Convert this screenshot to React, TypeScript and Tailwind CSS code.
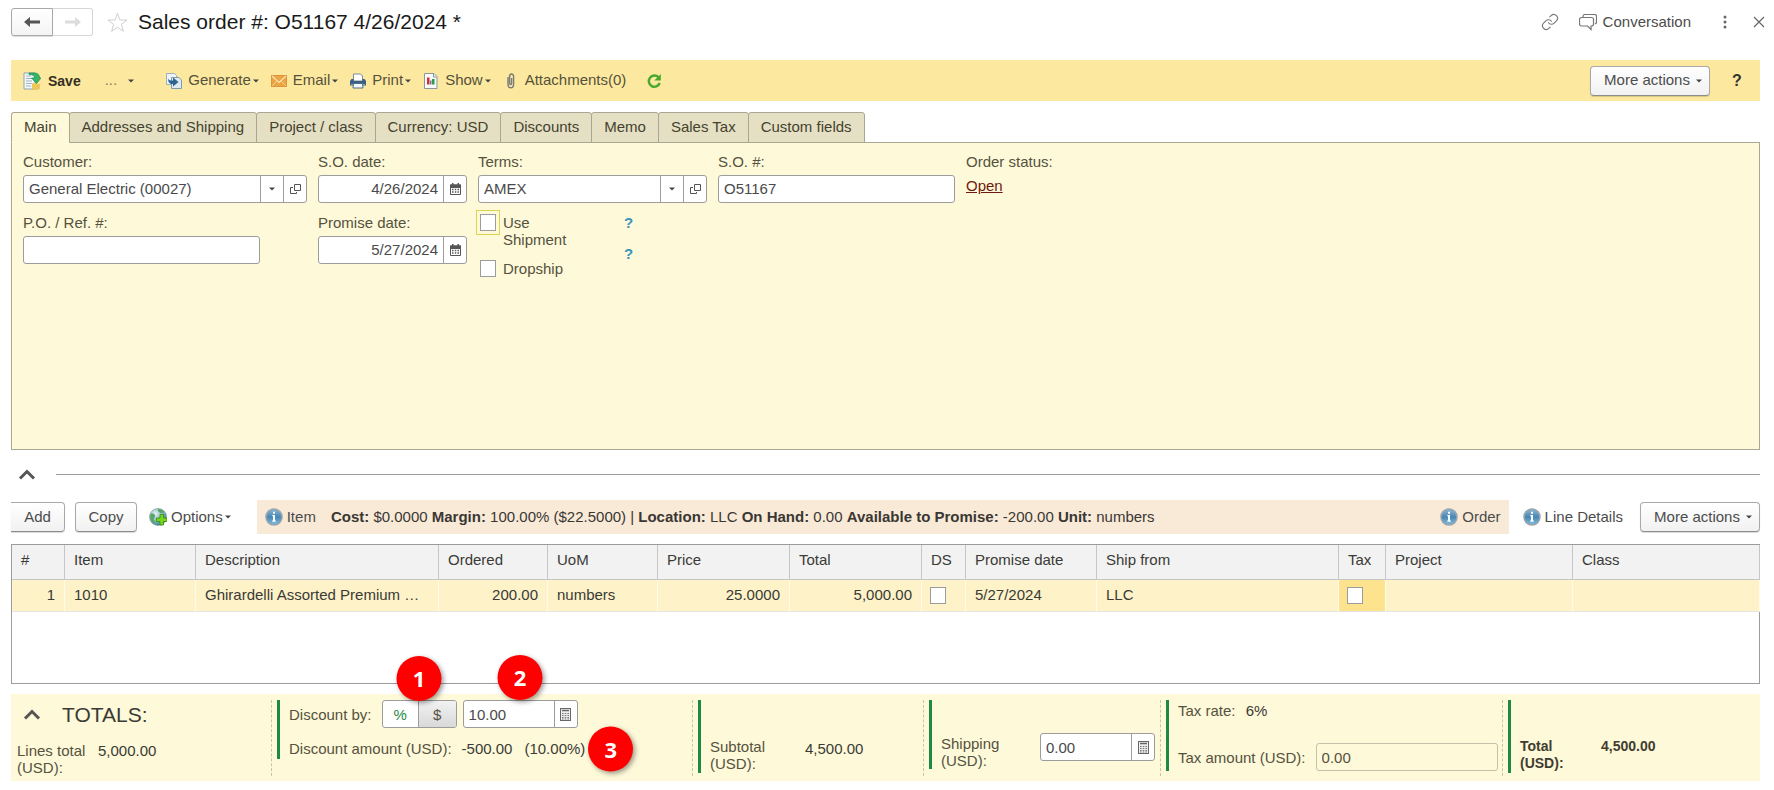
import type { ReactNode } from "react";
import { Link } from "lucide-react";

const Caret = () => (
  <svg width="6" height="4" viewBox="0 0 6 4" className="shrink-0" aria-hidden="true">
    <path d="M0 0.5h6L3 3.5z" fill="#444" />
  </svg>
);

const ChevronUp = () => (
  <svg width="18" height="12" viewBox="0 0 18 12" fill="none" aria-hidden="true">
    <path d="M2 10.500 9 3.500l7 7" stroke="#555" strokeWidth="3" />
  </svg>
);

const SaveIcon = () => (
  <svg width="18" height="18" viewBox="0 0 18 18" aria-hidden="true">
    <path d="M1 1h11v16H1z" fill="#f4f8fa" stroke="#8fa5b0" />
    <path d="M3 4h5M3 6.500h6M3 9h6M3 11.500h6M3 14h5" stroke="#9fb4c0" />
    <ellipse cx="13" cy="15.500" rx="4" ry="2" fill="#e2b33c" />
    <path d="M9 11v4.500a4 2 0 0 0 8 0V12z" fill="#efc75a" />
    <path d="M6 1h5C15 1 16.500 3 16.500 6H18l-4.500 5.500L8.500 6h3c0-2.500-2-3.500-5.500-3.500z" fill="#36b56b" stroke="#1d8a4b" strokeWidth="0.7" />
  </svg>
);

const GenerateIcon = () => (
  <svg width="16" height="16" viewBox="0 0 16 16" aria-hidden="true">
    <path d="M0.500 0.500h8l2 2v9h-10z" fill="#eef4f8" stroke="#9db0bd" />
    <path d="M5.500 4.500h7.500l2.500 2.500v8.500h-10z" fill="#dfeaf1" stroke="#7f9cae" />
    <path d="M2.500 5c0 2 1 2.500 4.500 2.500V4.500L12.500 9 7 13.500V11C3.500 11 1.500 9 2.500 5z" fill="#2f6490" />
  </svg>
);

const EmailIcon = () => (
  <svg width="16" height="16" viewBox="0 0 16 16" aria-hidden="true">
    <rect x="0.500" y="2.500" width="15" height="11" fill="#eba544" stroke="#d9963a" />
    <path d="M1 13 6 8M15 13l-5-5" stroke="#f6cf8c" />
    <path d="M1 3l7 6.500L15 3" fill="none" stroke="#fbe3b4" strokeWidth="1.200" />
  </svg>
);

const PrintIcon = () => (
  <svg width="16" height="16" viewBox="0 0 16 16" aria-hidden="true">
    <path d="M3.500 1h7l2 2v5h-9z" fill="#fff" stroke="#7d8b96" />
    <path d="M1.500 6h2v2h9V6h2L16 8v4.500h-16V8z" fill="#3c5f80" />
    <path d="M1 11.500h14" stroke="#88a8c2" />
    <path d="M3.500 10.500h9l.5 4.500H3z" fill="#f3f7fa" stroke="#4a6e8e" />
  </svg>
);

const ShowIcon = () => (
  <svg width="16" height="16" viewBox="0 0 16 16" aria-hidden="true">
    <path d="M1.500 0.500h9.500l3 3v12H1.500z" fill="#f7f9fa" stroke="#8b979f" />
    <path d="M10.500 1v3h3" fill="none" stroke="#8b979f" />
    <path d="M4 4.500h2.500v7H4z" fill="#d22f2f" />
    <path d="M7 7.500h1.500v4H7z" fill="#6d7f8b" />
    <path d="M9 6h2.500v5.500H9z" fill="#2d9a4a" />
  </svg>
);

const ClipIcon = () => (
  <svg width="16" height="16" viewBox="0 0 16 16" fill="none" aria-hidden="true">
    <path d="M5 4v7a2.800 3.800 0 0 0 5.600 0V3.500a2 2.500 0 0 0-4 0V10a1 1.500 0 0 0 2 0V5" stroke="#7a7a7a" strokeWidth="1.400" />
  </svg>
);

const RefreshIcon = () => (
  <svg width="16" height="16" viewBox="0 0 16 16" fill="none" aria-hidden="true">
    <path d="M12.500 4.300A5.600 5.600 0 1 0 13.700 10" stroke="#4aa82f" strokeWidth="2.500" />
    <path d="M14.800 1v6.500H8.300z" fill="#4aa82f" />
  </svg>
);

const OptionsIcon = () => (
  <svg width="18" height="18" viewBox="0 0 18 18" aria-hidden="true">
    <defs>
      <radialGradient id="globe" cx="0.35" cy="0.3" r="0.8">
        <stop offset="0" stopColor="#e6f1f1" />
        <stop offset="0.6" stopColor="#79b0b8" />
        <stop offset="1" stopColor="#2f6f8a" />
      </radialGradient>
    </defs>
    <circle cx="9" cy="9" r="8.500" fill="url(#globe)" stroke="#6a929a" strokeWidth="0.600" />
    <path d="M1.500 6c3-1 4.500 0 4.500 2S4 10 5 12s2 3 1 4C2.500 14.500.5 11 1.500 6zM9 1c3 0 5 1 6.500 3-2 1-3.500 1.500-5 .5S8.500 2.500 9 1z" fill="#5aa565" />
    <path d="M11 6.500h3.500V10H18v3.500h-3.500V17H11v-3.500H7.500V10H11z" fill="#7bd61c" stroke="#2f8a12" strokeWidth="0.800" />
  </svg>
);

const InfoIcon = () => (
  <svg width="18" height="18" viewBox="0 0 18 18" className="shrink-0" aria-hidden="true">
    <defs>
      <linearGradient id="info" x1="0" y1="0" x2="0" y2="1">
        <stop offset="0" stopColor="#8db8d6" />
        <stop offset="0.5" stopColor="#4886b4" />
        <stop offset="1" stopColor="#7cc0e4" />
      </linearGradient>
    </defs>
    <circle cx="9" cy="9" r="8" fill="url(#info)" stroke="#98a5ae" strokeWidth="1.600" />
    <path d="M8 3.800h2v1.900H8zM7.300 7H10v5.600h.8v1.200H7.200v-1.200H8V8.200h-.7z" fill="#fff" />
  </svg>
);

const CalendarIcon = () => (
  <svg width="11" height="12" viewBox="0 0 11 12" aria-hidden="true">
    <path d="M0.500 2h10v9.500h-10z" fill="#fff" stroke="#555" />
    <path d="M0 1.500h11V5H0zM2 0h1.500v2H2zM7.500 0H9v2H7.500z" fill="#555" />
    <path d="M2 6.500h1.500M4.800 6.500h1.500M7.500 6.500H9M2 9h1.500M4.800 9h1.500M7.500 9H9" stroke="#555" strokeWidth="1.300" />
  </svg>
);

const OpenIcon = () => (
  <svg width="11" height="11" viewBox="0 0 11 11" fill="none" stroke="#555" aria-hidden="true">
    <path d="M4.500 0.500h6v6h-6z" />
    <path d="M3 3.500H0.500v6h6V8" />
  </svg>
);

const CalcIcon = () => (
  <svg width="11" height="13" viewBox="0 0 11 13" aria-hidden="true">
    <rect x="0.500" y="0.500" width="10" height="12" fill="#eee" stroke="#666" />
    <path d="M2 2.500h7" stroke="#666" strokeWidth="1.600" />
    <path d="M2 5.500h7M2 7.500h7M2 9.500h7M2 11h7" stroke="#777" strokeWidth="1.200" strokeDasharray="1.600 1.100" />
  </svg>
);

const MenuItem = ({ icon, label }: { icon: ReactNode; label: string }) => (
  <button className="flex items-center">
    {icon}
    <span className="ml-1.5 mr-0.5">{label}</span>
    <Caret />
  </button>
);

const buttonClass =
  "flex h-[30px] items-center justify-center rounded-sm border border-[#a9a9a9] border-b-[#8c8c8c] bg-linear-to-b from-white to-[#f1f1f1] shadow-[0_1px_1px_rgba(0,0,0,0.15)]";

const MoreActions = () => (
  <button className={`${buttonClass} w-[120px] gap-1.5 pl-1.5`}>
    More actions
    <Caret />
  </button>
);

const checkboxClass = "h-[17px] w-4 shrink-0 appearance-none border border-[#9c9c9c] bg-white";

type FieldProps = {
  id: string;
  label: string;
  value?: string;
  right?: boolean;
  children?: ReactNode;
};

const Box = ({ id, value = "", right, children }: Omit<FieldProps, "label">) => (
  <div className="flex h-7 overflow-hidden rounded-[3px] border border-[#9c9c9c] bg-white">
    <input
      id={id}
      defaultValue={value}
      className={`min-w-0 flex-1 px-[5px] text-[#4a4a4a] outline-none ${right ? "text-right" : ""}`}
    />
    {children}
  </div>
);

const Field = ({ label, ...rest }: FieldProps) => (
  <div>
    <label htmlFor={rest.id} className="mb-[3px] block leading-5">
      {label}
    </label>
    <Box {...rest} />
  </div>
);

const Addon = ({ label, children }: { label: string; children: ReactNode }) => (
  <button
    aria-label={label}
    className="flex w-[23px] shrink-0 items-center justify-center border-l border-[#9c9c9c]"
  >
    {children}
  </button>
);

const LookupAddons = () => (
  <>
    <Addon label="Choose">
      <Caret />
    </Addon>
    <Addon label="Open">
      <OpenIcon />
    </Addon>
  </>
);

const DateAddon = () => (
  <Addon label="Calendar">
    <CalendarIcon />
  </Addon>
);

const CalcAddon = () => (
  <Addon label="Calculator">
    <CalcIcon />
  </Addon>
);

const Header = () => (
  <header className="mb-4 flex h-11 items-center pr-[9px] pl-[11px] text-[#4c4c4c]">
    <button
      aria-label="Back"
      className="flex h-7 w-[42px] items-center justify-center rounded-l-[3px] border border-[#a9a9a9] bg-linear-to-b from-white to-[#f4f4f4] shadow-[0_1px_1px_rgba(0,0,0,0.15)]"
    >
      <svg width="16" height="10" viewBox="0 0 16 10">
        <path d="M6 0v3.500h10v3H6V10L0 5z" fill="#555" />
      </svg>
    </button>
    <button
      aria-label="Forward"
      className="flex h-7 w-10 items-center justify-center rounded-r-[3px] border border-l-0 border-[#d6d6d6]"
    >
      <svg width="16" height="10" viewBox="0 0 16 10">
        <path d="M10 0v3.500H0v3h10V10l6-5z" fill="#dcdcdc" />
      </svg>
    </button>
    <button aria-label="Favorite" className="ml-3.5">
      <svg width="21" height="21" viewBox="0 0 21 21" fill="none" stroke="#cfcfcf">
        <path d="M10.500 1.200l2.400 6.700 7.100.2-5.600 4.300 2 6.900-5.900-4-5.900 4 2-6.900L1 8.100l7.100-.2z" />
      </svg>
    </button>
    <h1 className="ml-2.5 flex-1 text-[21px] text-[#1a1a1a]">Sales order #: O51167 4/26/2024 *</h1>
    <button aria-label="Copy link">
      <Link size={18} strokeWidth={1.5} className="text-[#777]" />
    </button>
    <button className="ml-5 flex items-center gap-1.5">
      <svg width="18" height="17" viewBox="0 0 18 17" fill="none" stroke="#777" strokeWidth="1.200">
        <path d="M4 3V2.500a2 2 0 0 1 2-2h9.500a2 2 0 0 1 2 2V8a2 2 0 0 1-1.500 2" />
        <path d="M2.500 3.500h10a2 2 0 0 1 2 2V10a2 2 0 0 1-2 2H12v3.500L8.500 12h-6a2 2 0 0 1-2-2V5.500a2 2 0 0 1 2-2z" />
      </svg>
      Conversation
    </button>
    <button aria-label="Menu" className="ml-8">
      <svg width="4" height="14" viewBox="0 0 4 14" fill="#666">
        <circle cx="2" cy="2" r="1.500" />
        <circle cx="2" cy="7" r="1.500" />
        <circle cx="2" cy="12" r="1.500" />
      </svg>
    </button>
    <button aria-label="Close" className="ml-[26px]">
      <svg width="12" height="12" viewBox="0 0 12 12" stroke="#666" strokeWidth="1.200">
        <path d="M1 1l10 10M11 1 1 11" />
      </svg>
    </button>
  </header>
);

const Toolbar = () => (
  <div className="flex h-[41px] items-center bg-[#fce99f] pl-3 text-[#56513a]">
    <button className="flex items-center gap-[7px] text-sm font-bold text-[#33301f]">
      <SaveIcon />
      Save
    </button>
    <button aria-label="More save options" className="ml-6 flex items-center gap-[11px]">
      <span className="text-[#857e5c]">...</span>
      <Caret />
    </button>
    <div className="ml-8 flex items-center gap-3">
      <MenuItem icon={<GenerateIcon />} label="Generate" />
      <MenuItem icon={<EmailIcon />} label="Email" />
      <MenuItem icon={<PrintIcon />} label="Print" />
      <MenuItem icon={<ShowIcon />} label="Show" />
      <button className="flex items-center gap-1.5">
        <ClipIcon />
        Attachments(0)
      </button>
    </div>
    <button aria-label="Refresh" className="ml-5">
      <RefreshIcon />
    </button>
    <div className="ml-auto flex items-center text-[#4c4c4c]">
      <MoreActions />
      <button className="w-[50px] pl-1 text-base font-bold text-[#333]">?</button>
    </div>
  </div>
);

const tabs = [
  "Main",
  "Addresses and Shipping",
  "Project / class",
  "Currency: USD",
  "Discounts",
  "Memo",
  "Sales Tax",
  "Custom fields",
];

const Tabs = () => (
  <div role="tablist" className="mt-[11px] -mb-px flex h-[31px]">
    {tabs.map((tab, i) => (
      <button
        key={tab}
        role="tab"
        aria-selected={i === 0}
        className={`rounded-t-[3px] border border-[#a9a793] px-3 pb-px text-[#44422f] ${
          i === 0 ? "border-b-[#fef9d9] bg-[#fef9d9]" : "-ml-px bg-[#e5e0c3]"
        }`}
      >
        {tab}
      </button>
    ))}
  </div>
);

const Form = () => (
  <section className="flex min-h-[308px] gap-[11px] border border-[#a9a793] bg-[#fef9d9] px-[11px] pt-[9px] text-[#55523f]">
    <div className="w-[284px] space-y-2.5">
      <Field id="customer" label="Customer:" value="General Electric (00027)">
        <LookupAddons />
      </Field>
      <div className="w-[237px]">
        <Field id="po" label="P.O. / Ref. #:" />
      </div>
    </div>
    <div className="w-[149px] space-y-2.5">
      <Field id="so-date" label="S.O. date:" value="4/26/2024" right>
        <DateAddon />
      </Field>
      <Field id="promise-date" label="Promise date:" value="5/27/2024" right>
        <DateAddon />
      </Field>
    </div>
    <div className="w-[229px]">
      <Field id="terms" label="Terms:" value="AMEX">
        <LookupAddons />
      </Field>
      <div className="mt-[11px] flex pl-0.5 leading-[17px]">
        <div className="w-36 space-y-3">
          <div className="flex items-start gap-[7px]">
            <input
              id="use-shipment"
              type="checkbox"
              className={`${checkboxClass} outline outline-offset-3 outline-[#ddd44e]`}
            />
            <label htmlFor="use-shipment" className="w-20">
              Use Shipment
            </label>
          </div>
          <div className="flex items-start gap-[7px]">
            <input id="dropship" type="checkbox" className={checkboxClass} />
            <label htmlFor="dropship">Dropship</label>
          </div>
        </div>
        <div className="flex flex-col items-start gap-3.5 font-bold text-[#3c93b9]">
          <button aria-label="Help: shipment">?</button>
          <button aria-label="Help: dropship">?</button>
        </div>
      </div>
    </div>
    <div className="w-[237px]">
      <Field id="so-number" label="S.O. #:" value="O51167" />
    </div>
    <div className="leading-5">
      <div>Order status:</div>
      <a href="#" className="mt-1 block text-[#701a10] underline">
        Open
      </a>
    </div>
  </section>
);

const ItemBar = () => (
  <div className="flex h-[34px] items-center text-[#4c4c4c]">
    <button className={`${buttonClass} w-[54px] rounded-l-none border-l-0`}>Add</button>
    <button className={`${buttonClass} ml-2.5 w-[62px]`}>Copy</button>
    <button className="ml-3 flex items-center">
      <OptionsIcon />
      <span className="ml-1 mr-0.5">Options</span>
      <Caret />
    </button>
    <div className="ml-[26px] flex h-full flex-1 items-center bg-[#f9ead8] px-2">
      <button className="flex items-center gap-1">
        <InfoIcon />
        Item
      </button>
      <p className="ml-[15px] flex-1 text-[#3a3733]">
        <b>Cost:</b> $0.0000 <b>Margin:</b> 100.00% ($22.5000) | <b>Location:</b> LLC <b>On Hand:</b>{" "}
        0.00 <b>Available to Promise:</b> -200.00 <b>Unit:</b> numbers
      </p>
      <button className="flex items-center gap-1">
        <InfoIcon />
        Order
      </button>
    </div>
    <button className="mr-[17px] ml-3.5 flex items-center gap-1">
      <InfoIcon />
      Line Details
    </button>
    <MoreActions />
  </div>
);

type Column = { name: string; width: number; value?: string; right?: boolean; check?: boolean };

const columns: Column[] = [
  { name: "#", width: 53, value: "1", right: true },
  { name: "Item", width: 131, value: "1010" },
  { name: "Description", width: 243, value: "Ghirardelli Assorted Premium …" },
  { name: "Ordered", width: 109, value: "200.00", right: true },
  { name: "UoM", width: 110, value: "numbers" },
  { name: "Price", width: 132, value: "25.0000", right: true },
  { name: "Total", width: 132, value: "5,000.00", right: true },
  { name: "DS", width: 44, check: true },
  { name: "Promise date", width: 131, value: "5/27/2024" },
  { name: "Ship from", width: 242, value: "LLC" },
  { name: "Tax", width: 47, check: true },
  { name: "Project", width: 187 },
  { name: "Class", width: 187 },
];

const ItemsTable = () => (
  <div className="mt-2.5 min-h-[140px] border border-[#9c9c9c]">
    <table className="w-full table-fixed border-separate border-spacing-0 text-[#3a3a36]">
      <colgroup>
        {columns.map((c) => (
          <col key={c.name} style={{ width: c.width }} />
        ))}
      </colgroup>
      <thead>
        <tr className="h-[35px] bg-[#f2f2f2]">
          {columns.map((c) => (
            <th
              key={c.name}
              className="border-r border-b border-[#c6c6c6] px-[9px] pb-1 text-left font-normal whitespace-nowrap"
            >
              {c.name}
            </th>
          ))}
        </tr>
      </thead>
      <tbody>
        <tr className="h-8 bg-[#fdf2c8]">
          {columns.map((c) => (
            <td
              key={c.name}
              className={`overflow-hidden border-r border-b border-r-[#fffbe8] border-b-[#e4e4e4] whitespace-nowrap ${
                c.check ? "px-2" : "px-[9px]"
              } ${c.right ? "text-right" : ""} ${c.name === "Tax" ? "bg-[#fde38d]" : ""}`}
            >
              {c.check ? (
                <input type="checkbox" aria-label={c.name} className={`${checkboxClass} block`} />
              ) : (
                c.value
              )}
            </td>
          ))}
        </tr>
      </tbody>
    </table>
  </div>
);

const Badge = ({ n, className }: { n: number; className: string }) => (
  <span
    className={`absolute flex size-[45px] items-center justify-center rounded-full bg-[#f00] font-['Open_Sans',sans-serif] text-[22px] font-bold text-white shadow-[2px_2px_5px_rgba(0,0,0,0.4)] ${className}`}
  >
    {n}
  </span>
);

const TotalCell = ({ children, className = "" }: { children: ReactNode; className?: string }) => (
  <div className="border-l border-dashed border-[#c9c4ac] pl-[5px]">
    <div className={`border-l-[3px] border-[#1f8a43] pl-[9px] ${className}`}>{children}</div>
  </div>
);

const Totals = () => (
  <section className="mt-2.5 grid h-[87px] grid-cols-[260fr_421fr_231fr_237fr_342fr_258fr] bg-[#fef9d9] py-1.5 leading-[17px] text-[#55523f]">
    <div className="pl-1.5">
      <div className="flex h-7 items-center pl-1.5 text-[#3a3a36]">
        <button aria-label="Collapse totals">
          <ChevronUp />
        </button>
        <h2 className="ml-[21px] text-[21px]">TOTALS:</h2>
      </div>
      <div className="mt-3.5 flex">
        <span className="w-[81px]">Lines total (USD):</span>
        <span className="text-[#3a3a36]">5,000.00</span>
      </div>
    </div>
    <TotalCell className="h-[59px]">
      <div className="flex items-center">
        <label htmlFor="discount">Discount by:</label>
        <div className="relative ml-2.5 flex h-7 rounded-[3px] border border-[#9c9c9c] bg-white">
          <button className="w-[35px] text-[#1f8a43]">%</button>
          <button className="w-[38px] rounded-r-xs border-l border-[#9c9c9c] bg-linear-to-b from-[#f2f2f2] to-[#d9d9d9]">
            $
          </button>
          <Badge n={1} className="bottom-full left-1/2 -translate-x-1/2" />
        </div>
        <div className="relative ml-1.5 w-[115px]">
          <Box id="discount" value="10.00">
            <CalcAddon />
          </Box>
          <Badge n={2} className="bottom-full left-1/2 -translate-x-1/2" />
        </div>
      </div>
      <div className="mt-3 flex">
        <span>Discount amount (USD):</span>
        <span className="ml-2.5 text-[#3a3a36]">-500.00</span>
        <span className="relative ml-3 text-[#3a3a36]">
          (10.00%)
          <Badge n={3} className="top-1/2 left-full ml-[3px] -translate-y-1/2" />
        </span>
      </div>
    </TotalCell>
    <TotalCell className="flex h-[73px] items-end pb-px">
      <span className="w-[95px]">
        Subtotal
        <br />
        (USD):
      </span>
      <span className="mb-[15px] text-[#3a3a36]">4,500.00</span>
    </TotalCell>
    <TotalCell className="flex h-[69px] items-end">
      <label htmlFor="shipping" className="w-[99px]">
        Shipping
        <br />
        (USD):
      </label>
      <div className="mb-2 w-[115px]">
        <Box id="shipping" value="0.00">
          <CalcAddon />
        </Box>
      </div>
    </TotalCell>
    <TotalCell className="flex h-[71px] flex-col justify-between">
      <div className="pt-0.5">
        Tax rate: <span className="ml-1.5 text-[#3a3a36]">6%</span>
      </div>
      <div className="flex items-center pr-1">
        <label htmlFor="tax-amount">Tax amount (USD):</label>
        <input
          id="tax-amount"
          defaultValue="0.00"
          readOnly
          className="ml-2.5 h-7 min-w-0 flex-1 rounded-[3px] border border-[#c4c0ab] px-[5px] outline-none"
        />
      </div>
    </TotalCell>
    <TotalCell className="flex h-[73px] items-end pb-px text-sm/[17px] font-bold text-[#3f3d30]">
      <span className="w-[81px]">
        Total
        <br />
        (USD):
      </span>
      <span className="mb-[17px]">4,500.00</span>
    </TotalCell>
  </section>
);

const App = () => {
  return (
    <div className="bg-white font-['Liberation_Sans',Arial,sans-serif] text-[15px]">
      <Header />
      <main className="mr-3.5 ml-[11px]">
        <Toolbar />
        <Tabs />
        <Form />
        <div className="mb-0.5 flex h-12 items-center gap-5 pl-[7px]">
          <button aria-label="Collapse header">
            <ChevronUp />
          </button>
          <hr className="flex-1 border-[#9c9c9c]" />
        </div>
        <ItemBar />
        <ItemsTable />
        <Totals />
      </main>
    </div>
  );
};

export default App;
